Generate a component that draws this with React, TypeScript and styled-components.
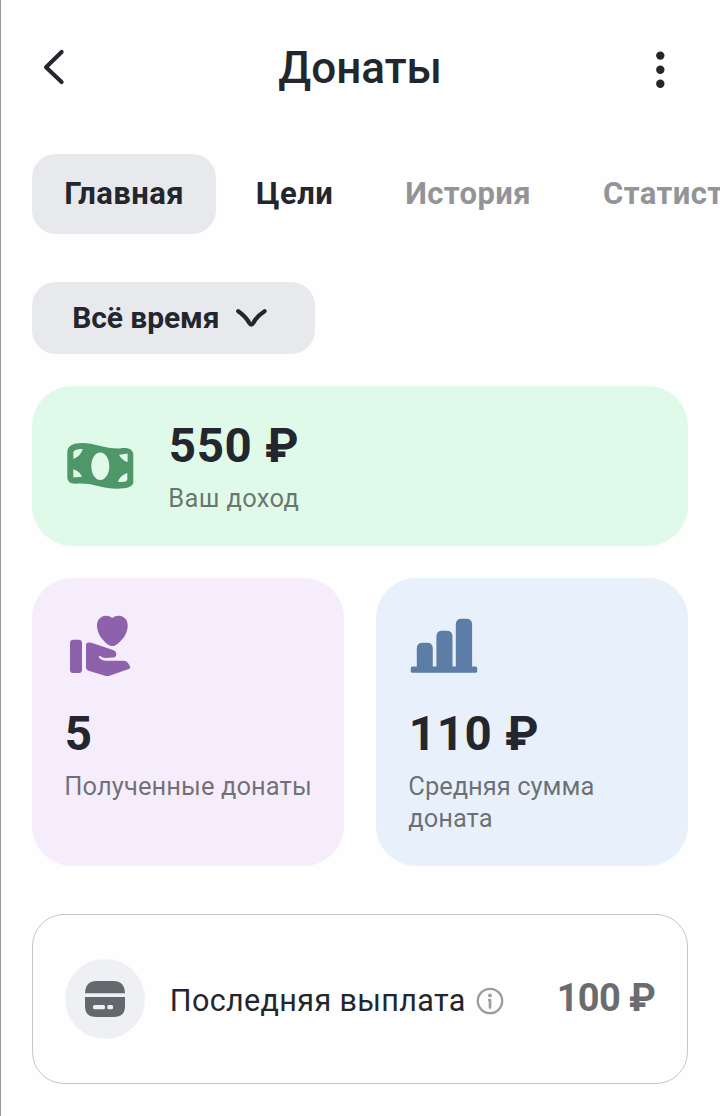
import React from "react";
import styled, { createGlobalStyle } from "styled-components";

const GlobalStyle = createGlobalStyle`
  *, *::before, *::after { box-sizing: border-box; }
  html, body { margin: 0; background: #fefefe; overflow: hidden; }
  body { font-family: Roboto, "Noto Sans", sans-serif; color: #24262d; }
  button { font: inherit; color: inherit; border: 0; background: none; padding: 0; }
`;

const Screen = styled.main`
  width: 720px;
  height: 1116px;
  overflow: hidden;
  border-left: 1px solid #98989a;
  padding-left: 31.3px;
`;

const Header = styled.header`
  height: 135px;
  display: flex;
  align-items: center;
  justify-content: space-between;
  padding: 0 32px 0 0;
`;

const Title = styled.h1`
  margin: 0;
  font-size: 44px;
  line-height: 56px;
  font-weight: 500;
`;

const IconButton = styled.button`
  width: 56px;
  height: 56px;
  svg { display: block; }
`;

const Tabs = styled.nav`
  display: flex;
  gap: 8px;
  margin-top: 19px;
  white-space: nowrap;
`;

const Tab = styled.button<{ $active?: boolean; $muted?: boolean }>`
  flex: none;
  height: 80px;
  padding: 0 32px 2px;
  border-radius: 24px;
  font-size: 31px;
  font-weight: 700;
  letter-spacing: 0.42px;
  background: ${(p) => (p.$active ? "#e8e9ed" : "transparent")};
  color: ${(p) => (p.$muted ? "#939497" : "#24262d")};
`;

const Filter = styled.button`
  display: flex;
  align-items: center;
  gap: 15px;
  width: 283px;
  height: 72px;
  margin-top: 48px;
  padding: 0 0 2px 40px;
  border-radius: 24px;
  background: #e8e9ed;
  font-size: 30px;
  font-weight: 700;
  letter-spacing: -0.1px;
`;

const Stats = styled.section`
  display: grid;
  grid-template-columns: 312px 312px;
  gap: 32px;
  margin-top: 32px;
`;

const Card = styled.article<{ $bg: string; $wide?: boolean }>`
  background: ${(p) => p.$bg};
  border-radius: 40px;
  padding: 32px;
  ${(p) =>
    p.$wide
      ? "grid-column: 1 / -1; display: flex; align-items: center; gap: 32px; height: 160px;"
      : "height: 288px;"}
`;

const CardIcon = styled.svg<{ $gap?: number }>`
  display: block;
  flex: none;
  width: 72px;
  height: 72px;
  margin-bottom: ${(p) => p.$gap ?? 0}px;
`;

const Amount = styled.div`
  padding-left: 0.5px;
  font-size: 47.5px;
  line-height: 56px;
  font-weight: 700;
  letter-spacing: 0.65px;
  white-space: nowrap;
`;

const Caption = styled.div<{ $spacing?: number }>`
  margin: 8px -4px 0 0;
  font-size: 25.5px;
  line-height: 32px;
  letter-spacing: ${(p) => p.$spacing ?? 0}px;
  color: rgba(0, 0, 0, 0.55);
`;

const Payout = styled.section`
  display: flex;
  align-items: center;
  width: 656px;
  height: 170px;
  margin-top: 48px;
  padding: 0 32px;
  border: 1px solid #c6c7c8;
  border-radius: 32px;
`;

const RoundIcon = styled.div`
  display: grid;
  place-items: center;
  width: 80px;
  height: 80px;
  border-radius: 50%;
  background: #eff0f3;
`;

const PayoutLabel = styled.div`
  display: flex;
  align-items: center;
  gap: 10px;
  margin-left: 24.5px;
  padding-top: 4px;
  font-size: 30.5px;
  line-height: 36px;
  letter-spacing: 0.37px;
  white-space: nowrap;
`;

const PayoutAmount = styled.div`
  margin-left: auto;
  padding-bottom: 2px;
  font-size: 38px;
  font-weight: 700;
  letter-spacing: -0.6px;
  color: #6b6c70;
`;

export default function App() {
  return (
    <>
      <GlobalStyle />
      <Screen>
        <Header>
          <IconButton aria-label="Назад">
            <svg width="56" height="56" viewBox="0 0 56 56" fill="none">
              <path d="M29.6 12 14 27.2 29.6 42.1" stroke="#24262d" strokeWidth="4.1" strokeLinecap="round" strokeLinejoin="round" />
            </svg>
          </IconButton>
          <Title>Донаты</Title>
          <IconButton aria-label="Меню">
            <svg width="56" height="56" viewBox="0 0 56 56" fill="#24262d">
              <circle cx="28.3" cy="15.6" r="4.2" />
              <circle cx="28.3" cy="29.7" r="4.2" />
              <circle cx="28.3" cy="43.8" r="4.2" />
            </svg>
          </IconButton>
        </Header>

        <Tabs>
          <Tab $active>Главная</Tab>
          <Tab>Цели</Tab>
          <Tab $muted>История</Tab>
          <Tab $muted>Статистика</Tab>
        </Tabs>

        <Filter>
          Всё время
          <svg width="34" height="24" viewBox="0 0 34 24" fill="none">
            <path d="M4.2 6.2C8.7 9.2 12.5 12.7 15.3 18Q17.3 21.2 19.3 18C22 12.7 26 9.2 30.6 6.2" stroke="#24262d" strokeWidth="4.2" strokeLinecap="round" />
          </svg>
        </Filter>

        <Stats>
          <Card $bg="#e0fae9" $wide>
            <CardIcon viewBox="0 0 72 72" fill="#4f9669">
              <path
                fillRule="evenodd"
                d="M3.3 22C3.3 16 9 13 18 13C30 13 42 19 56 18.5C64 17 69.3 19 69.3 25V52C69.3 57 62 58.7 53.3 58.7C39 58.7 28 52.5 14 53.5C7 54.5 3.3 52 3.3 47ZM36.3 22.6C31.3 22.6 27.3 28.7 27.3 36.3S31.3 50 36.3 50S45.3 43.9 45.3 36.3S41.3 22.6 36.3 22.6ZM9.3 22.5Q9.5 20.5 11.5 20Q15 18.8 18.8 19Q16.7 26 9.5 29ZM55 24.8Q59 24.4 63.6 23.6V32.3Q57.5 30 55 24.8ZM9.3 39.3Q16 41.2 17.9 47Q13.5 46.6 9.3 47.6ZM63.3 43V49.5Q63.3 51.2 61.5 51.4Q58 52.2 54 51.9Q55.7 45.5 63.3 43Z"
              />
            </CardIcon>
            <div>
              <Amount>550 ₽</Amount>
              <Caption $spacing={0.35}>Ваш доход</Caption>
            </div>
          </Card>

          <Card $bg="#f5edfb">
            <CardIcon viewBox="-1 0 72 72" fill="#8d61ab" $gap={24}>
              <rect x="5" y="29.7" width="12" height="33.4" rx="3.4" />
              <path d="M21 35Q21 32.3 24 32.5Q26 32.6 28 33.3L48 40Q51.3 41.2 51.3 44.2Q51.2 47.4 47.8 47.6L40.5 48Q38.5 48 36 46.5Q34.7 45.5 34 46.3Q33.4 47.3 34.6 48.2Q37.5 50.7 41 50.7H58.5Q61.3 50.7 62.6 52.4Q64.3 54.5 65.2 57Q65.6 58.3 64.4 58.8L44.5 65.7Q42.3 66.4 40 65.8L23.5 60.7Q21 59.9 21 57.5Z" />
              <path d="M47.3 8.1C50 5.8 53 5.4 55.7 6.1C60.5 7.4 62.7 11 62.7 16C62.7 24 55.8 32.5 50 35.5Q47.3 36.6 44.7 35.5C38.8 32.5 32 24 32 16C32 11 34.2 7.4 39 6.1C41.7 5.4 44.6 5.8 47.3 8.1Z" />
            </CardIcon>
            <Amount>5</Amount>
            <Caption $spacing={0.08}>Полученные донаты</Caption>
          </Card>

          <Card $bg="#e7f0fb">
            <CardIcon viewBox="0 0 72 72" fill="#5c7da6" $gap={24}>
              <path d="M8.8 58V38.5Q8.8 32.7 14.6 32.7H19Q24.8 32.7 24.8 38.5V58Z" />
              <path d="M28.4 58V26.5Q28.4 20.7 34.2 20.7H38.7Q44.5 20.7 44.5 26.5V58Z" />
              <path d="M47.8 58V14.5Q47.8 8.7 53.6 8.7H58.3Q64.1 8.7 64.1 14.5V58Z" />
              <rect x="2.8" y="56.5" width="66.4" height="6.3" rx="1.6" />
            </CardIcon>
            <Amount>110 ₽</Amount>
            <Caption>Средняя сумма доната</Caption>
          </Card>
        </Stats>

        <Payout>
          <RoundIcon>
            <svg width="40" height="36" viewBox="0 0 40 36" fill="#66666d">
              <path d="M0 12.2C.5 4 4 0 11.5 0H28.5C36 0 39.5 4 40 12.2Z" />
              <path
                fillRule="evenodd"
                d="M0 16H40V24.5C40 32.5 36.5 36 28.5 36H11.5C3.5 36 0 32.5 0 24.5ZM9.5 24A1.5 1.5 0 0 0 8 25.5V26.7A1.5 1.5 0 0 0 9.5 28.2H18.5A1.5 1.5 0 0 0 20 26.7V25.5A1.5 1.5 0 0 0 18.5 24ZM23.8 24A1.5 1.5 0 0 0 22.3 25.5V26.7A1.5 1.5 0 0 0 23.8 28.2H26.6A1.5 1.5 0 0 0 28.1 26.7V25.5A1.5 1.5 0 0 0 26.6 24Z"
              />
            </svg>
          </RoundIcon>
          <PayoutLabel>
            Последняя выплата
            <svg width="28" height="28" viewBox="0 0 28 28" fill="none">
              <circle cx="14" cy="14" r="12.2" stroke="#9c9c9d" strokeWidth="2.3" />
              <circle cx="14" cy="8.4" r="1.9" fill="#9c9c9d" />
              <path d="M13.2 13H14V20.6" stroke="#9c9c9d" strokeWidth="2.6" strokeLinecap="round" strokeLinejoin="round" />
            </svg>
          </PayoutLabel>
          <PayoutAmount>100 ₽</PayoutAmount>
        </Payout>
      </Screen>
    </>
  );
}
